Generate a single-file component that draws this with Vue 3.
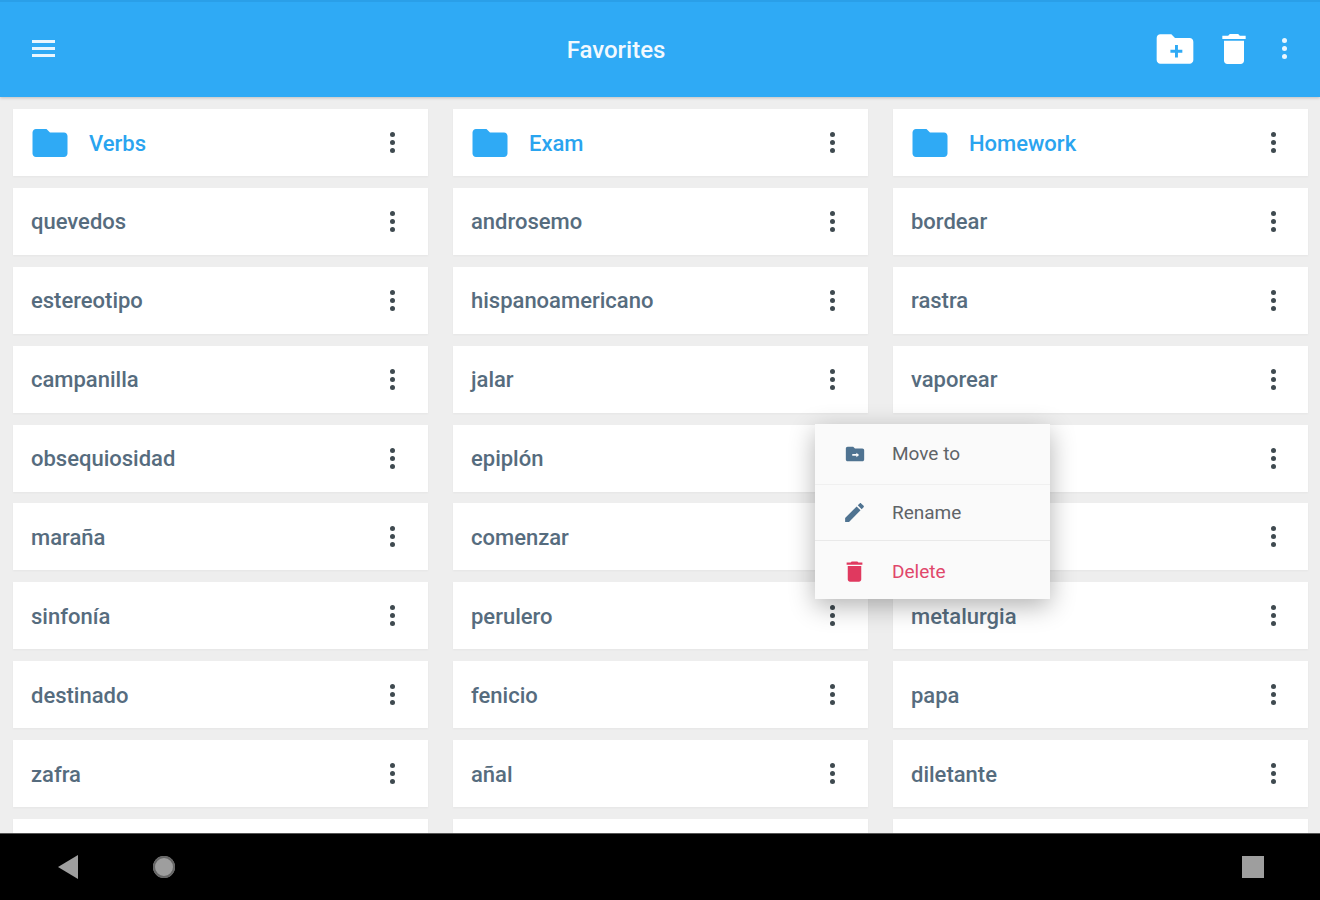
<script setup>
const columns = [
  { folder: 'Verbs', words: ['quevedos', 'estereotipo', 'campanilla', 'obsequiosidad', 'maraña', 'sinfonía', 'destinado', 'zafra', ''] },
  { folder: 'Exam', words: ['androsemo', 'hispanoamericano', 'jalar', 'epiplón', 'comenzar', 'perulero', 'fenicio', 'añal', ''] },
  { folder: 'Homework', words: ['bordear', 'rastra', 'vaporear', '', '', 'metalurgia', 'papa', 'diletante', ''] },
]

// rows go left to right, so flatten by row index
const rows = []
rows.push(...columns.map((c) => ({ text: c.folder, folder: true })))
for (let i = 0; i < columns[0].words.length; i++) {
  rows.push(...columns.map((c) => ({ text: c.words[i], folder: false })))
}

const folderPath = 'M10 4H4c-1.1 0-1.99.9-1.99 2L2 18c0 1.1.9 2 2 2h16c1.1 0 2-.9 2-2V8c0-1.1-.9-2-2-2h-8l-2-2z'
const deletePath = 'M6 19c0 1.1.9 2 2 2h8c1.1 0 2-.9 2-2V7H6v12zM19 4h-3.5l-1-1h-5l-1 1H5v2h14V4z'
</script>

<template>
  <div class="screen">
    <header class="toolbar">
      <button class="hamburger" aria-label="Menu">
        <span></span><span></span><span></span>
      </button>
      <h1 class="title">Favorites</h1>
      <div class="actions">
        <svg class="new-folder" viewBox="0 0 24 24"><path d="M20 6h-8l-2-2H4c-1.11 0-1.99.89-1.99 2L2 18c0 1.11.89 2 2 2h16c1.11 0 2-.89 2-2V8c0-1.11-.89-2-2-2zm-4 8h-2.4v2.6h-1.6V14H9.500v-1.600h2.500V9.800h1.600v2.600H16V14z" fill-rule="evenodd" /></svg>
        <svg class="trash" viewBox="0 0 24 24"><path :d="deletePath" /></svg>
        <div class="kebab light"><i></i><i></i><i></i></div>
      </div>
    </header>

    <main class="list">
      <div v-for="(row, index) in rows" :key="index" class="card" :class="{ folder: row.folder }">
        <svg v-if="row.folder" class="folder-icon" viewBox="0 0 24 24"><path :d="folderPath" /></svg>
        <span class="label">{{ row.text }}</span>
        <div class="kebab"><i></i><i></i><i></i></div>
      </div>
    </main>

    <nav class="navbar">
      <svg class="nav-back" viewBox="0 0 20 24"><path d="M20 0v24L0 12z" /></svg>
      <span class="nav-home"></span>
      <span class="nav-recent"></span>
    </nav>

    <div class="menu">
      <div class="menu-item move">
        <span class="menu-icon">
          <svg viewBox="0 0 24 24"><path d="M20 6h-8l-2-2H4c-1.100 0-1.990.9-1.990 2L2 18c0 1.100.9 2 2 2h16c1.100 0 2-.9 2-2V8c0-1.100-.9-2-2-2zm-6.500 9.500V14H9v-2h4.500v-1.500l3 2.500-3 2.500z" fill-rule="evenodd" /></svg>
        </span>
        <span>Move to</span>
      </div>
      <div class="menu-item rename">
        <span class="menu-icon">
          <svg viewBox="0 0 24 24"><path d="M3 17.250V21h3.750L17.810 9.940l-3.750-3.750L3 17.250zM20.710 7.040c.39-.39.39-1.020 0-1.410l-2.340-2.340c-.39-.39-1.020-.39-1.410 0l-1.830 1.830 3.750 3.750 1.830-1.830z" /></svg>
        </span>
        <span>Rename</span>
      </div>
      <div class="menu-item delete">
        <span class="menu-icon">
          <svg viewBox="0 0 24 24"><path :d="deletePath" /></svg>
        </span>
        <span>Delete</span>
      </div>
    </div>
  </div>
</template>

<style scoped>
.screen {
  position: relative;
  display: flex;
  flex-direction: column;
  width: 1320px;
  height: 900px;
  overflow: hidden;
  background: #eeeeee;
  font-family: Roboto, "Liberation Sans", sans-serif;
}

.toolbar {
  display: flex;
  align-items: center;
  flex: 0 0 97px;
  box-sizing: border-box;
  padding-right: 29px;
  border-top: 2px solid #2a9fe8;
  background: #2faaf5;
  box-shadow: 0 1px 3px rgba(0, 0, 0, 0.2);
  z-index: 1;
}

.hamburger {
  display: flex;
  flex-direction: column;
  gap: 4px;
  width: 23px;
  margin: -3px 0 0 32px;
  padding: 0;
  border: 0;
  background: none;
}

.hamburger span {
  height: 3px;
  background: #e9f6fe;
}

.title {
  flex: 1;
  margin: 0;
  padding: 0 0 0 24px;
  text-align: center;
  font-size: 24px;
  font-weight: 500;
  color: #f2f9fe;
}

.actions {
  display: flex;
  align-items: center;
  width: 138px;
  margin-top: -2px;
}

.actions svg {
  fill: #fff;
}

.new-folder {
  width: 44px;
  height: 44px;
}

.trash {
  width: 40px;
  height: 40px;
  margin-left: 17px;
}

.list {
  flex: 1;
  display: grid;
  grid-template-columns: repeat(3, 415px);
  grid-auto-rows: 67px;
  column-gap: 25px;
  row-gap: 11.875px;
  padding: 12px 0 0 13px;
  overflow: hidden;
  min-height: 0;
}

.card {
  display: flex;
  align-items: center;
  padding: 0 33px 0 18px;
  background: #fff;
  box-shadow: 0 1px 2px rgba(0, 0, 0, 0.04);
}

.card:nth-child(3n) {
  padding-right: 32px;
}

.card.folder {
  padding-left: 16px;
}

.label {
  flex: 1;
  padding-top: 1px;
  font-size: 22px;
  font-weight: 500;
  color: #566c7e;
}

.folder .label {
  color: #2aa4ef;
}

.folder-icon {
  flex: none;
  width: 42px;
  height: 42px;
  margin-right: 18px;
  fill: #2faaf5;
}

.kebab {
  display: flex;
  flex-direction: column;
  align-items: center;
  gap: 3px;
  width: 6px;
}

.kebab i {
  width: 5px;
  height: 5px;
  border-radius: 50%;
  background: #3f4a50;
}

.kebab.light {
  margin-left: 27px;
}

.kebab.light i {
  background: #e9f6fe;
}

.navbar {
  display: flex;
  align-items: center;
  flex: 0 0 67px;
  background: #000;
  border-top: 1px solid #555;
  box-sizing: border-box;
  z-index: 1;
}

.nav-back {
  width: 20px;
  height: 24px;
  margin-left: 58px;
  fill: #9e9e9e;
}

.nav-home {
  width: 22px;
  height: 22px;
  margin-left: 75px;
  border-radius: 50%;
  background: #9e9e9e;
  box-shadow: inset 0 0 0 2px #666;
}

.nav-recent {
  width: 22px;
  height: 22px;
  margin-left: auto;
  margin-right: 56px;
  background: #9e9e9e;
}

.menu {
  position: absolute;
  left: 815px;
  top: 424px;
  width: 235px;
  background: #fafafa;
  box-shadow: 0 7px 24px rgba(0, 0, 0, 0.3);
  z-index: 2;
}

.menu-item {
  display: flex;
  align-items: center;
  box-sizing: border-box;
  padding-left: 26px;
  font-size: 19px;
  color: #5f6468;
}

.menu-item.move {
  height: 60px;
  padding-bottom: 1px;
}

.menu-item.rename {
  height: 56px;
  border-top: 1px solid #f0f0f0;
}

.menu-item.delete {
  height: 59px;
  padding-top: 2px;
  border-top: 1px solid #e9e9e9;
  color: #e0476b;
}

.menu-icon {
  flex: none;
  display: flex;
  align-items: center;
  justify-content: center;
  width: 27px;
  height: 29px;
  margin-right: 24px;
}

.menu-icon svg {
  fill: #4f7391;
}

.move svg {
  width: 22px;
  height: 22px;
}

.rename svg {
  width: 25px;
  height: 25px;
}

.delete svg {
  width: 29px;
  height: 29px;
  fill: #e0395f;
}
</style>
